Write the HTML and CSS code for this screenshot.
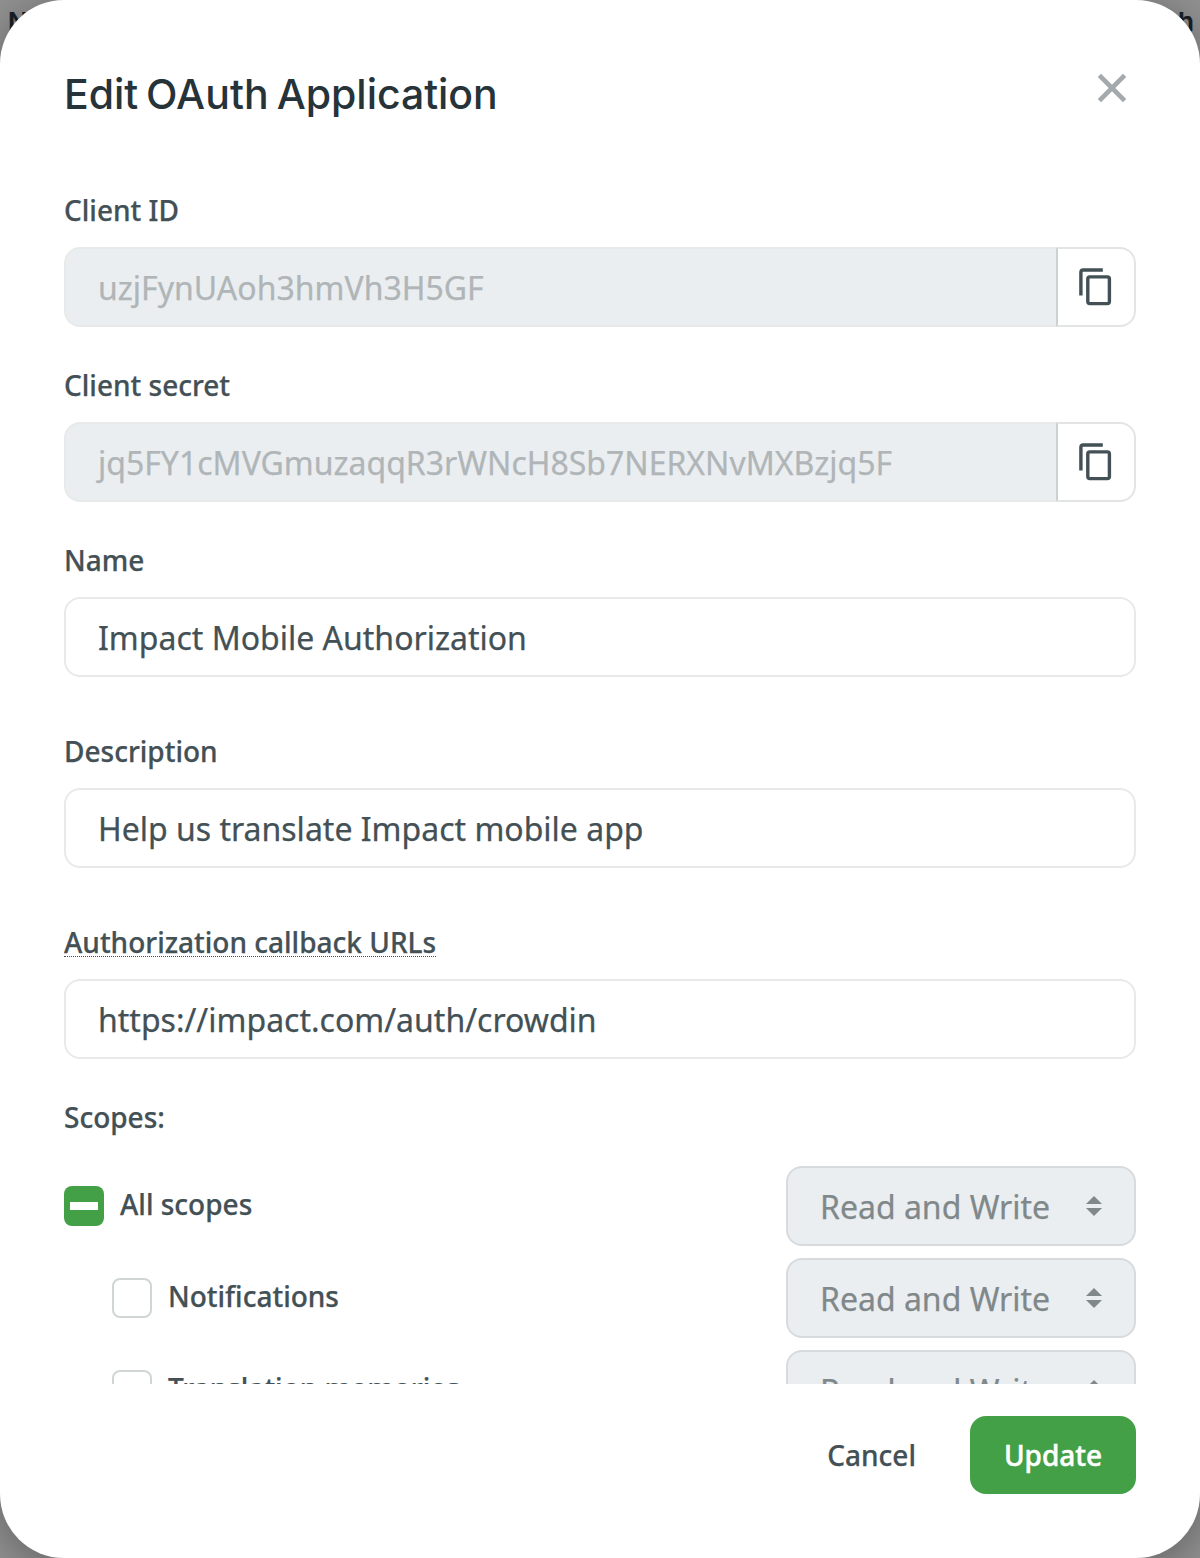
FILE: index.html
```
<!DOCTYPE html>
<html lang="en">
<head>
<meta charset="utf-8">
<title>Edit OAuth Application</title>
<link rel="stylesheet" href="styles.css">
</head>
<body>
<div class="page-heading"><span>N</span><span>h</span></div>
<main class="modal">
  <header class="modal-header">
    <h1 class="title">Edit <span>OAuth</span> Application</h1>
    <button class="close" aria-label="Close">
      <svg width="32" height="32" viewBox="0 0 32 32"><path d="M3.4 3.4L28.6 28.6M28.6 3.4L3.4 28.6" fill="none" stroke="#a4aaac" stroke-width="4.8"/></svg>
    </button>
  </header>
  <div class="modal-body">
    <div class="field">
      <div class="label"><span>Client ID</span></div>
      <div class="group">
        <div class="input disabled">uzjFynUAoh3hmVh3H5GF</div>
        <button class="copy" aria-label="Copy"><svg width="36" height="40" viewBox="0 0 36 40"><g fill="none" stroke="#435055" stroke-width="3.4"><path d="M2.9 28.5V5.2Q2.9 3 5.1 3H24.8"/><rect x="9.8" y="9.9" width="21.6" height="26.7" rx="2"/></g></svg></button>
      </div>
    </div>
    <div class="field">
      <div class="label"><span>Client secret</span></div>
      <div class="group">
        <div class="input disabled">jq5FY1cMVGmuzaqqR3rWNcH8Sb7NERXNvMXBzjq5F</div>
        <button class="copy" aria-label="Copy"><svg width="36" height="40" viewBox="0 0 36 40"><g fill="none" stroke="#435055" stroke-width="3.4"><path d="M2.9 28.5V5.2Q2.9 3 5.1 3H24.8"/><rect x="9.8" y="9.9" width="21.6" height="26.7" rx="2"/></g></svg></button>
      </div>
    </div>
    <div class="field roomy">
      <div class="label"><span>Name</span></div>
      <div class="input">Impact Mobile Authorization</div>
    </div>
    <div class="field roomy">
      <div class="label"><span>Description</span></div>
      <div class="input">Help us translate Impact mobile app</div>
    </div>
    <div class="field">
      <div class="label"><span class="hint">Authorization callback URLs</span></div>
      <div class="input">https://impact.com/auth/crowdin</div>
    </div>
    <div class="label"><span>Scopes:</span></div>
    <div class="scopes">
      <div class="scope">
        <span class="check mixed"></span><span class="scope-name">All scopes</span>
        <div class="select"><span>Read and Write</span><svg width="16" height="20" viewBox="0 0 16 20"><path d="M8 0L16 8H0ZM0 12H16L8 20Z" fill="#80888a"/></svg></div>
      </div>
      <div class="scope child">
        <span class="check"></span><span class="scope-name">Notifications</span>
        <div class="select"><span>Read and Write</span><svg width="16" height="20" viewBox="0 0 16 20"><path d="M8 0L16 8H0ZM0 12H16L8 20Z" fill="#80888a"/></svg></div>
      </div>
      <div class="scope child">
        <span class="check"></span><span class="scope-name">Translation memories</span>
        <div class="select"><span>Read and Write</span><svg width="16" height="20" viewBox="0 0 16 20"><path d="M8 0L16 8H0ZM0 12H16L8 20Z" fill="#80888a"/></svg></div>
      </div>
    </div>
  </div>
  <footer class="modal-footer">
    <button class="btn">Cancel</button>
    <button class="btn primary">Update</button>
  </footer>
</main>
</body>
</html>
```
FILE: styles.css
```
* { box-sizing: border-box; }
body {
  margin: 0;
  height: 1558px;
  position: relative;
  overflow: hidden;
  background: #929292;
  color: #435055;
  font-family: "Noto Sans", sans-serif;
  -webkit-text-stroke: .25px;
}
button { border: 0; padding: 0; background: none; font: inherit; color: inherit; }
svg { display: block; }

/* Page content behind the dialog */
.page-heading {
  position: absolute;
  inset: 7px 6px auto 8px;
  display: flex;
  justify-content: space-between;
  font: 600 26px/30px Inter, sans-serif;
  color: #182126;
}

.modal {
  position: relative;
  display: flex;
  flex-direction: column;
  height: 1558px;
  padding: 64px 64px 0;
  border-radius: 64px;
  background: #fff;
  box-shadow: 0 8px 48px rgba(0, 0, 0, .35);
}
.modal-header {
  display: flex;
  justify-content: space-between;
  align-items: flex-start;
  height: 125px;
}
.title {
  margin: 0;
  font: 500 41px/60px Inter, sans-serif;
  word-spacing: -3px;
  letter-spacing: -.05px;
  color: #263338;
  -webkit-text-stroke: 0;
}
.title span { letter-spacing: .1px; }
.close { margin: 8px 8px 0 0; }

.modal-body { height: 1195px; overflow: hidden; }
.field { margin-bottom: 37px; }
.roomy { margin-bottom: 53px; }
.label {
  height: 42px;
  margin-bottom: 16px;
  font-size: 28px;
  font-weight: 500;
  line-height: 42px;
}
.label span { display: inline-block; }
.label .hint { height: 36px; border-bottom: 1px dotted #435055; }
.group { display: flex; }
.input {
  flex: 1;
  height: 80px;
  padding: 0 32px;
  border: 2px solid #e8eaea;
  border-radius: 16px;
  font-size: 32px;
  line-height: 78px;
  white-space: nowrap;
}
.disabled {
  border-right: 0;
  border-radius: 16px 0 0 16px;
  background: #eaeef1;
  color: #b0b5b7;
}
.copy {
  display: flex;
  width: 80px;
  padding: 18px 0 0 20px;
  border: 2px solid #e3e5e5;
  border-left-color: #ccd1d2;
  border-radius: 0 16px 16px 0;
}

.scopes { display: flex; flex-direction: column; gap: 12px; margin-top: 28px; }
.scope { display: flex; align-items: center; height: 80px; }
.child { padding-left: 48px; }
.check {
  display: flex;
  align-items: center;
  justify-content: center;
  width: 40px;
  height: 40px;
  border: 2px solid #d0d5d5;
  border-radius: 8px;
}
.mixed { border: 0; background: #43a047; }
.mixed::before { content: ""; width: 28px; height: 8px; background: #fff; }
.scope-name { margin: -5px auto 0 16px; font-size: 28px; font-weight: 500; }
.select {
  display: flex;
  align-items: center;
  justify-content: space-between;
  width: 350px;
  height: 80px;
  padding: 0 32px;
  border: 2px solid #d7dbde;
  border-radius: 16px;
  background: #eaeef1;
  color: #80888a;
  font-size: 32px;
}

.modal-footer { display: flex; justify-content: flex-end; padding-top: 32px; }
.btn {
  height: 78px;
  padding: 0 34px;
  border-radius: 16px;
  font-size: 28px;
  font-weight: 500;
}
.btn:first-child { margin-right: 20px; }
.primary { width: 166px; padding: 0; background: #43a047; color: #fff; -webkit-text-stroke: .5px; }
```
